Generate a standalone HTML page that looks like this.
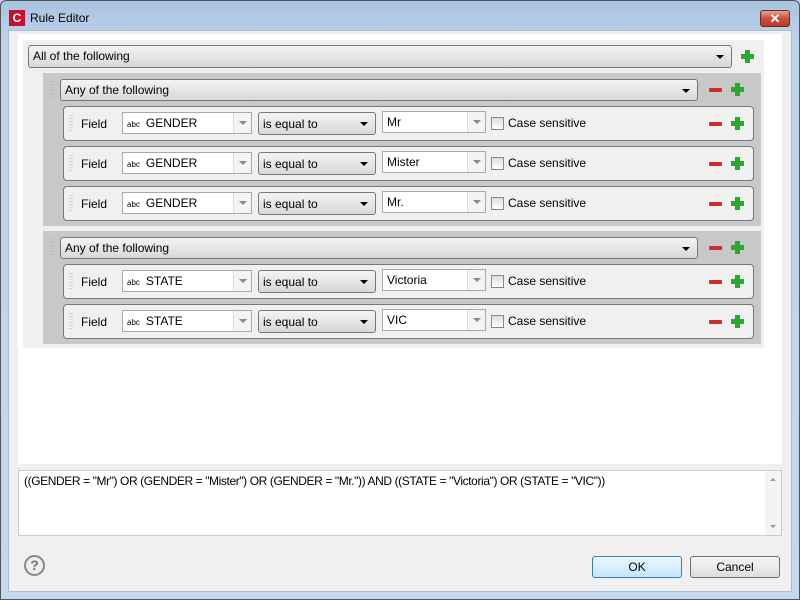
<!DOCTYPE html>
<html><head><meta charset="utf-8"><style>
*{box-sizing:border-box;margin:0;padding:0}
body{width:800px;height:600px;overflow:hidden;font-family:"Liberation Sans",sans-serif;font-size:12px;color:#000;position:relative;background:#b9d1ea}
.abs{position:absolute}
#frame{left:0;top:0;width:800px;height:600px;background:linear-gradient(#a9c3e0,#bcd3ec 40px,#c4d8ee);border:1px solid #555;border-radius:6px 6px 0 0}
#dlg{left:8px;top:30px;width:784px;height:562px;background:#f0f0f0;border:1px solid #a8bcd2}
.title{left:30px;top:11px;font-size:12px}
.ico{left:9px;top:10px;width:16px;height:16px;background:#c8102e;color:#fff;font-weight:bold;font-size:12px;text-align:center;line-height:16px}
.close{left:760px;top:10px;width:30px;height:17px;background:linear-gradient(#e8a090,#c8503c 50%,#b83a26);border:1px solid #6a2a20;border-radius:3px;color:#fff;text-align:center;font-weight:bold;line-height:15px;font-size:13px}
.white{left:18px;top:34px;width:764px;height:430px;background:#fff}
.pan{left:23px;top:40px;width:741px;height:308px;background:#f0f0f0}
.combo{border:1px solid #777;border-radius:3px;background:linear-gradient(#f4f4f4,#e6e6e6 50%,#d8d8d8);padding-left:4px;font-size:12px}
.combo:after{content:"";position:absolute;right:7px;top:9px;border:4px solid transparent;border-top:4px solid #000;border-bottom:0}
.grp{background:#c8c8c8}
.row{background:#f0f0f0;border:1px solid #777;border-radius:4px}
.drag{width:4px;background-image:radial-gradient(#aaa 35%,transparent 40%);background-size:2px 3px;opacity:.8}
.wcombo{background:#fff;border:1px solid #aaa;padding-left:4px}
.wcombo .b{position:absolute;right:0;top:0;width:18px;height:100%;background:#f4f4f4;border-left:1px solid #ddd}
.wcombo .b:after{content:"";position:absolute;left:5px;top:8px;border:4px solid transparent;border-top:4px solid #888;border-bottom:0}
.minus{width:13px;height:4px;background:#c83030;border-radius:1px}
.plus{width:13px;height:13px}
.plus:before{content:"";position:absolute;left:4px;top:0;width:5px;height:13px;background:#2aa830}
.plus:after{content:"";position:absolute;left:0;top:4px;width:13px;height:5px;background:#2aa830}
.cb{width:13px;height:13px;border:1px solid #888;background:linear-gradient(#ddd,#fff)}
.btn{border:1px solid #707070;border-radius:3px;background:linear-gradient(#f2f2f2,#ebebeb 50%,#dcdcdc);text-align:center;line-height:20px}
</style></head><body>
<div id="frame" class="abs"></div>
<div class="abs ico">C</div>
<div class="abs title">Rule Editor</div>
<div class="abs close">✕</div>
<div id="dlg" class="abs"></div>
<div class="abs white"></div>
<div class="abs pan"></div>
<div class="abs combo" style="left:28px;top:45px;width:704px;height:23px;line-height:21px">All of the following</div>
<div class="abs plus" style="left:741px;top:50px"></div>

<div class="abs grp" style="left:43px;top:73px;width:718px;height:153px"></div>
<div class="abs drag" style="left:50px;top:80px;height:18px"></div>
<div class="abs combo" style="left:60px;top:79px;width:638px;height:22px;line-height:20px">Any of the following</div>
<div class="abs minus" style="left:709px;top:88px"></div>
<div class="abs plus" style="left:731px;top:83px"></div>

<div class="abs grp" style="left:43px;top:231px;width:718px;height:113px"></div>
<div class="abs drag" style="left:50px;top:238px;height:18px"></div>
<div class="abs combo" style="left:60px;top:237px;width:638px;height:22px;line-height:20px">Any of the following</div>
<div class="abs minus" style="left:709px;top:246px"></div>
<div class="abs plus" style="left:731px;top:241px"></div>

<div id="rows"></div>
<script>
var rows=[[106,"GENDER","Mr"],[146,"GENDER","Mister"],[186,"GENDER","Mr."],[264,"STATE","Victoria"],[304,"STATE","VIC"]];
var h="";
rows.forEach(function(r){var y=r[0];
h+='<div class="abs row" style="left:63px;top:'+y+'px;width:691px;height:35px"></div>';
h+='<div class="abs drag" style="left:69px;top:'+(y+8)+'px;height:18px"></div>';
h+='<div class="abs" style="left:81px;top:'+(y+11)+'px">Field</div>';
h+='<div class="abs wcombo" style="left:122px;top:'+(y+6)+'px;width:130px;height:22px;line-height:20px"><span style="font-size:8px;margin-right:6px">abc</span>'+r[1]+'<div class="b"></div></div>';
h+='<div class="abs combo" style="left:258px;top:'+(y+6)+'px;width:118px;height:23px;line-height:23px">is equal to</div>';
h+='<div class="abs wcombo" style="left:382px;top:'+(y+5)+'px;width:104px;height:22px;line-height:20px">'+r[2]+'<div class="b"></div></div>';
h+='<div class="abs cb" style="left:491px;top:'+(y+11)+'px"></div>';
h+='<div class="abs" style="left:508px;top:'+(y+10)+'px">Case sensitive</div>';
h+='<div class="abs minus" style="left:709px;top:'+(y+16)+'px"></div>';
h+='<div class="abs plus" style="left:731px;top:'+(y+11)+'px"></div>';
});
document.getElementById("rows").innerHTML=h;
</script>

<div class="abs" style="left:18px;top:470px;width:764px;height:66px;background:#fff;border:1px solid #ccc"></div>
<div class="abs" style="left:765px;top:471px;width:16px;height:64px;background:#f4f4f4"></div>
<div class="abs" style="left:770px;top:478px;border:3px solid transparent;border-bottom:3px solid #999;border-top:0"></div>
<div class="abs" style="left:770px;top:525px;border:3px solid transparent;border-top:3px solid #999;border-bottom:0"></div>
<div class="abs" style="left:24px;top:474px;font-size:12px;letter-spacing:-0.4px">((GENDER = "Mr") OR (GENDER = "Mister") OR (GENDER = "Mr.")) AND ((STATE = "Victoria") OR (STATE = "VIC"))</div>

<div class="abs" style="left:24px;top:555px;width:21px;height:21px;border:2px solid #888;border-radius:50%;text-align:center;line-height:17px;font-weight:bold;color:#777;font-size:14px">?</div>
<div class="abs btn" style="left:592px;top:556px;width:90px;height:22px;border-color:#3c7fb1;background:linear-gradient(#eaf6fd,#d9f0fc 50%,#bee6fd)">OK</div>
<div class="abs btn" style="left:690px;top:556px;width:90px;height:22px">Cancel</div>
</body></html>
